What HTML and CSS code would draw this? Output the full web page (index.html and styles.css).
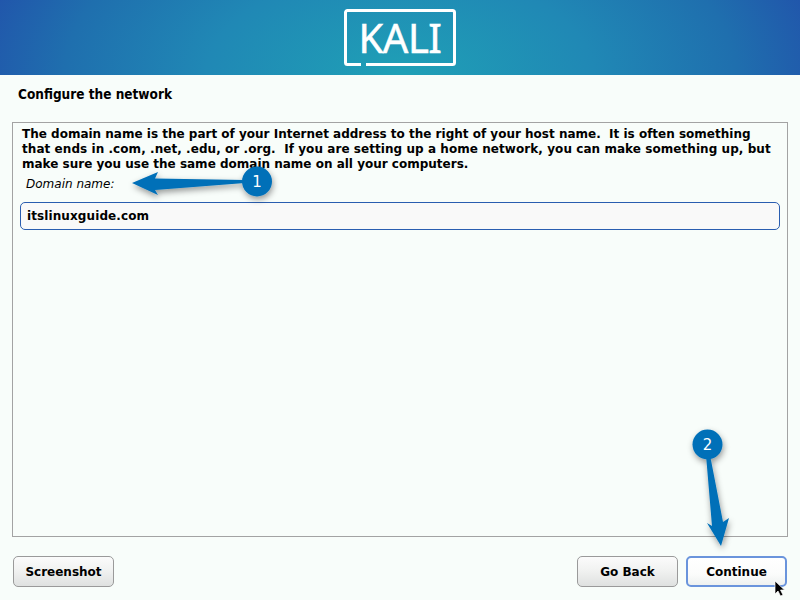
FILE: index.html
```html
<!DOCTYPE html>
<html lang="en">
<head>
    <meta charset="utf-8">
    <title>Configure the network</title>
    <link rel="stylesheet" href="styles.css">
</head>
<body>
    <!-- banner -->
    <header class="banner">
        <div class="logo">
            <svg class="logo-frame" width="112" height="58" viewBox="0 0 112 58">
                <path d="M17 55.500H3.500a2 2 0 0 1-2-2V3.500a2 2 0 0 1 2-2h105a2 2 0 0 1 2 2v50a2 2 0 0 1-2 2H22" fill="none" stroke="#fff" stroke-width="3"/>
            </svg>
            <span class="logo-text">KALI</span>
        </div>
    </header>

    <h1 class="step-title">Configure the network</h1>

    <main class="panel">
        <p class="help">The domain name is the part of your Internet address to the right of your host name.  It is often something
<span class="help-wide">that ends in .com, .net, .edu, or .org.  If you are setting up a home network, you can make something up, but</span>
make sure you use the same domain name on all your computers.</p>
        <label class="field-label" for="domain">Domain name:</label>
        <input class="field" id="domain" type="text" value="itslinuxguide.com">
    </main>

    <footer class="actions">
        <button class="btn">Screenshot</button>
        <span class="spacer"></span>
        <button class="btn">Go Back</button>
        <button class="btn btn-focus">Continue</button>
    </footer>

    <!-- callouts drawn over the screenshot -->
    <svg class="callouts" width="800" height="600" viewBox="0 0 800 600">
        <defs>
            <filter id="soft" x="-30%" y="-30%" width="170%" height="170%">
                <feDropShadow dx="1" dy="3" stdDeviation="3" flood-color="#000" flood-opacity="0.4"/>
            </filter>
        </defs>
        <g fill="#0070b8" filter="url(#soft)">
            <path d="M132 183L158 172L155 178.500L245 180V183L155 190L158 195Z"/>
            <circle cx="257" cy="181.500" r="15"/>
        </g>
        <g fill="#0070b8" filter="url(#soft)">
            <path d="M706 455H710L723 522L729 518L721 546L707 523L712 526Z"/>
            <circle cx="707.500" cy="444.500" r="15"/>
        </g>
        <text class="callout-num" x="257" y="187">1</text>
        <text class="callout-num" x="707.500" y="450">2</text>
        <path d="M775 581V594L778 591L780.500 596L783 595L780.500 590H784.500Z" fill="#000" stroke="#fff" stroke-width="0.7"/>
    </svg>
</body>
</html>
```

FILE: styles.css
```css
* {
    box-sizing: border-box;
}

body {
    margin: 0;
    width: 800px;
    height: 600px;
    display: flex;
    flex-direction: column;
    position: relative;
    overflow: hidden;
    background: #f8fdfa;
    color: #000;
    font-family: "DejaVu Sans", sans-serif;
    font-size: 12px;
}

.banner {
    height: 75px;
    flex: none;
    display: flex;
    justify-content: center;
    padding-top: 9px;
    background: radial-gradient(ellipse 430px 230px at 50% 100%, #1fa0b6 0%, #2088b5 45%, #1f6fae 78%, #2155ab 100%);
}

.logo {
    position: relative;
    width: 112px;
    height: 58px;
    display: flex;
    align-items: center;
    justify-content: center;
}

.logo-frame {
    position: absolute;
    top: 0;
    left: 0;
}

.logo-text {
    color: #fff;
    font-family: "Noto Sans", sans-serif;
    font-size: 40px;
    line-height: 1;
    letter-spacing: -0.5px;
    -webkit-text-stroke: 0.5px #fff;
}

.step-title {
    margin: 0;
    padding: 12px 18px 0;
    height: 47px;
    flex: none;
    font-family: "DejaVu Sans Condensed", "DejaVu Sans", sans-serif;
    font-size: 13.5px;
    font-weight: bold;
    line-height: 15px;
}

.panel {
    width: 776px;
    height: 415px;
    flex: none;
    margin-left: 12px;
    padding: 4px 7px;
    border: 1px solid #a3a3a3;
}

.help {
    margin: 0 0 0 2px;
    font-weight: bold;
    font-size: 12px;
    line-height: 15px;
    white-space: pre-wrap;
}

.help-wide {
    letter-spacing: 0.06px;
}

.field-label {
    display: block;
    margin: 5px 0 10px 6px;
    font-size: 12px;
    font-style: italic;
    line-height: 15px;
}

.field {
    display: block;
    width: 760px;
    height: 28px;
    padding: 0 6px;
    border: 1.5px solid #2a5db0;
    border-radius: 5px;
    outline: none;
    background: #f9f9f9;
    color: #000;
    font-family: inherit;
    font-size: 12px;
    font-weight: bold;
    letter-spacing: 0.1px;
}

.actions {
    display: flex;
    gap: 8px;
    padding: 19px 13px 0;
}

.spacer {
    flex: 1;
}

.btn {
    width: 101px;
    height: 31px;
    padding: 0;
    border: 1px solid #9a9a9a;
    border-radius: 5px;
    background: linear-gradient(#fbfbfb, #f1f2f1 45%, #dfe1e0);
    color: #000;
    font-family: inherit;
    font-size: 12px;
    font-weight: bold;
}

.btn-focus {
    border: 2px solid #6a94dc;
    background: linear-gradient(#fff, #fbfcfb 60%, #eef1f0);
}

.callouts {
    position: absolute;
    top: 0;
    left: 0;
}

.callout-num {
    fill: #fff;
    font-family: "DejaVu Sans", sans-serif;
    font-size: 15px;
    text-anchor: middle;
}
```
